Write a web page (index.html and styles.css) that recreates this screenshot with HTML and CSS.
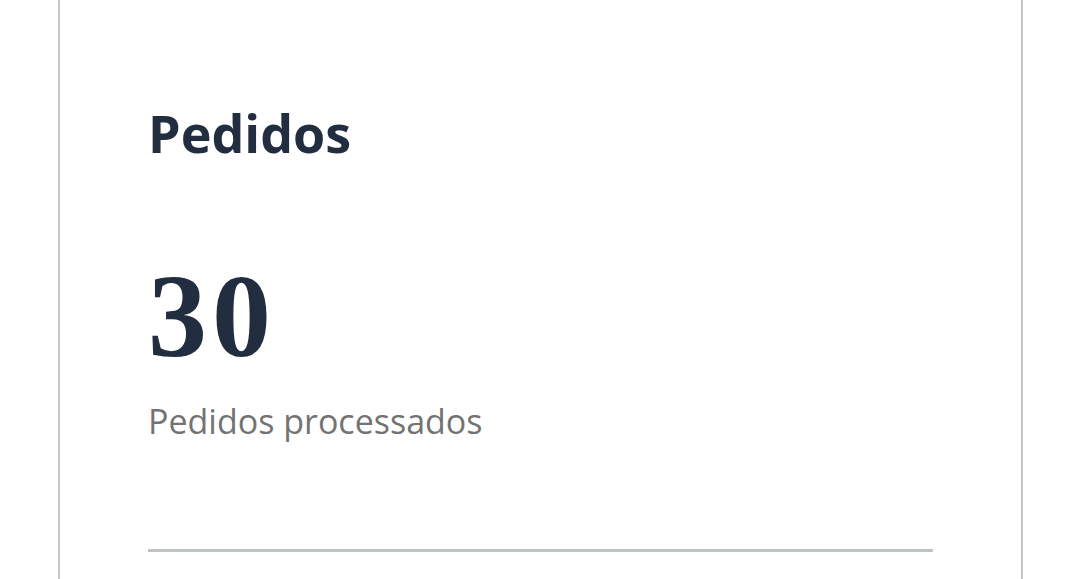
FILE: index.html
```html
<!DOCTYPE html>
<html lang="pt">
<head>
  <meta charset="UTF-8" />
  <title>Pedidos</title>
  <link rel="stylesheet" href="styles.css">
</head>
<body>

<div class="card">
  <h2 class="card-title">Pedidos</h2>
  <div class="stat-value">30</div>
  <p class="stat-label">Pedidos processados</p>
  <hr class="divider">
</div>

</body>
</html>
```

FILE: styles.css
```css
body {
  margin: 0;
  padding: 0;
  background: #fff;
  font-family: "Open Sans", "Noto Sans", sans-serif;
}
.card {
  margin: 0 57px 0 58px;
  height: 579px;
  box-sizing: border-box;
  padding: 99px 88px 0 88px;
  border-left: 2px solid #c3c6c6;
  border-right: 2px solid #c3c6c6;
}
.card-title {
  margin: 0;
  font-size: 52px;
  font-weight: 700;
  line-height: 68px;
  color: #222e40;
}
.stat-value {
  margin-top: 95px;
  font-family: "Liberation Serif", serif;
  font-weight: 700;
  font-size: 118px;
  line-height: 110px;
  letter-spacing: 5px;
  color: #222e40;
}
.stat-label {
  margin: 25px 0 0 0;
  font-size: 34px;
  line-height: 48px;
  color: #737373;
}
.divider {
  margin: 104px 0 0 0;
  border: none;
  height: 3px;
  background: #bfc3c3;
}
```
